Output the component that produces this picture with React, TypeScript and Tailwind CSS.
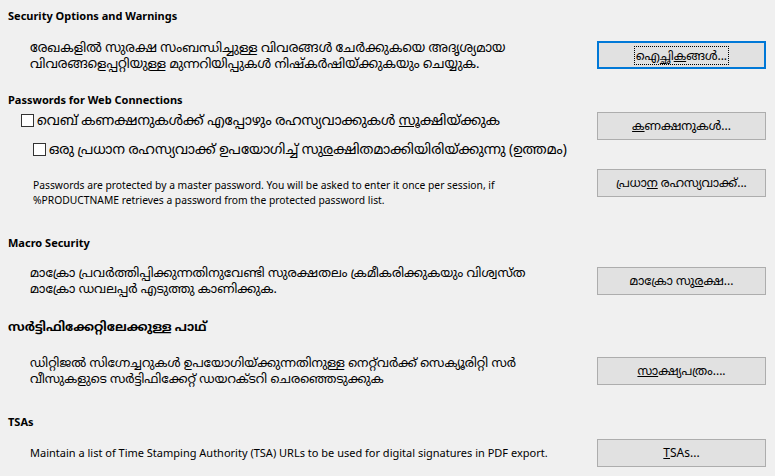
import React from "react";

const font = "font-['Noto_Sans','Noto_Sans_Malayalam','Liberation_Sans',sans-serif]";

interface BtnProps {
  children: React.ReactNode;
  focused?: boolean;
}

const DlgButton = ({ children, focused = false }: BtnProps) => (
  <button
    className={`h-[28px] w-[169px] shrink-0 bg-[#e1e1e1] text-[12px] text-black ${
      focused ? "border-2 border-[#0078d7]" : "border border-[#adadad]"
    } flex items-center justify-center`}
  >
    {focused ? (
      <span className="border border-dotted border-black px-[1px] leading-[17px]">{children}</span>
    ) : (
      <span>{children}</span>
    )}
  </button>
);

const Heading = ({ children, big = false }: { children: React.ReactNode; big?: boolean }) => (
  <div className={`pl-[8px] font-bold text-black ${big ? "text-[12.5px]" : "text-[11px]"}`}>{children}</div>
);

const Check = () => (
  <span className="inline-block h-[13px] w-[13px] shrink-0 border border-[#333] bg-white" />
);

export default function App() {
  return (
    <div className={`h-[476px] w-[775px] overflow-hidden bg-[#f0f0f0] text-black ${font}`}>
      {/* Security options */}
      <div className="pt-[8px]">
        <Heading>Security Options and Warnings</Heading>
        <div className="mt-[14px] flex items-center justify-between pr-[9px]">
          <p className="pl-[30px] text-[13px] leading-[16.5px]">
            രേഖകളിൽ സുരക്ഷ സംബന്ധിച്ചുള്ള വിവരങ്ങൾ ചേർക്കുകയെ അദൃശ്യമായ
            <br />
            വിവരങ്ങളെപ്പറ്റിയുള്ള മുന്നറിയിപ്പുകൾ നിഷ്കർഷിയ്ക്കുകയും ചെയ്യുക.
          </p>
          <DlgButton focused>
            ഐച്ഛി<u>ക</u>ങ്ങൾ...
          </DlgButton>
        </div>
      </div>

      {/* Passwords */}
      <div className="mt-[20px]">
        <Heading>Passwords for Web Connections</Heading>
        <div className="mt-[4px] flex items-start justify-between pr-[9px]">
          <div className="flex flex-col">
            <label className="flex items-center gap-[3px] pl-[21px] pt-[1px] text-[13.7px] leading-[14px]">
              <Check />
              <span>
                വെബ് കണക്ഷനുകൾക്ക് എപ്പോഴും രഹസ്യവാക്കുകൾ <u>സൂ</u>ക്ഷിയ്ക്കുക
              </span>
            </label>
            <label className="mt-[15px] flex items-center gap-[3px] pl-[33px] text-[13.7px] leading-[14px]">
              <Check />
              <span>
                ഒരു പ്രധാന രഹസ്യവാക്ക് ഉപയോഗിച്ച് സു<u>ര</u>ക്ഷിതമാക്കിയിരിയ്ക്കുന്നു (ഉത്തമം)
              </span>
            </label>
          </div>
          <DlgButton>
            <u>ക</u>ണക്ഷനുകൾ...
          </DlgButton>
        </div>
        <div className="mt-[13px] flex items-start justify-between pr-[9px]">
          <p className="pl-[33px] pt-[9px] text-[10.3px] leading-[15px]">
            Passwords are protected by a master password. You will be asked to enter it once per session, if
            <br />
            %PRODUCTNAME retrieves a password from the protected password list.
          </p>
          <DlgButton>
            പ്രധാ<u>ന</u> രഹസ്യവാക്ക്...
          </DlgButton>
        </div>
      </div>

      {/* Macro */}
      <div className="mt-[27px]">
        <Heading>Macro Security</Heading>
        <div className="mt-[13px] flex items-center justify-between pr-[9px]">
          <p className="pl-[30px] text-[12.6px] leading-[16px]">
            മാക്രോ പ്രവര്‍ത്തിപ്പിക്കുന്നതിനുവേണ്ടി സുരക്ഷതലം ക്രമീകരിക്കുകയും വിശ്വസ്ത
            <br />
            മാക്രോ ഡവലപ്പര്‍ എടുത്തു കാണിക്കുക.
          </p>
          <DlgButton>
            മാക്രോ സു<u>ര</u>ക്ഷ...
          </DlgButton>
        </div>
      </div>

      {/* Certificate path */}
      <div className="mt-[21px]">
        <Heading big>സർട്ടിഫിക്കേറ്റിലേക്കുള്ള പാഥ്</Heading>
        <div className="mt-[19px] flex items-center justify-between pr-[9px]">
          <p className="pl-[30px] text-[12.5px] leading-[16px]">
            ഡിറ്റിജൽ സിഗ്നേച്ചറുകൾ ഉപയോഗിയ്ക്കുന്നതിനുള്ള നെറ്റ്‌വർക്ക് സെക്യൂരിറ്റി സർ
            <br />
            വീസുകളുടെ സർട്ടിഫിക്കേറ്റ് ഡയറക്ടറി ചെരഞ്ഞെടുക്കുക
          </p>
          <DlgButton>
            <u>സാ</u>ക്ഷ്യപത്രം....
          </DlgButton>
        </div>
      </div>

      {/* TSAs */}
      <div className="mt-[27px]">
        <Heading>TSAs</Heading>
        <div className="mt-[8px] flex items-center justify-between pr-[9px]">
          <p className="pl-[30px] text-[11px]">
            Maintain a list of Time Stamping Authority (TSA) URLs to be used for digital signatures in PDF export.
          </p>
          <DlgButton>
            <u>T</u>SAs...
          </DlgButton>
        </div>
      </div>
    </div>
  );
}
